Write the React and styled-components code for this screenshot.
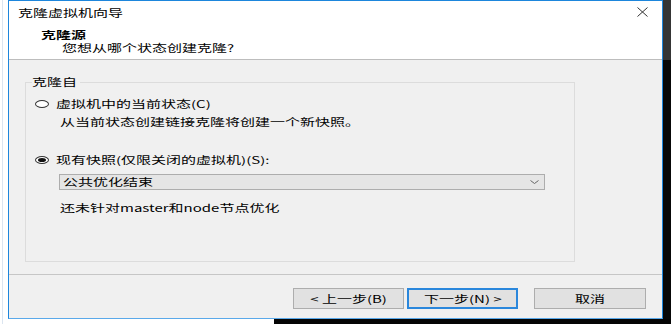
import React from "react";
import styled, { createGlobalStyle } from "styled-components";

const GlobalStyle = createGlobalStyle`
  html, body { margin: 0; padding: 0; background: #fff; }
  body {
    font-family: "Noto Sans CJK SC", "Noto Sans", sans-serif;
    color: #000;
    font-size: 10px;
    line-height: 12px;
  }
  * { box-sizing: border-box; }
`;

const Page = styled.div`
  display: flex;
  width: 671px;
  height: 324px;
  overflow: hidden;
  background: #fff;
`;

const LeftEdge = styled.div`
  margin-left: 2px;
  width: 6px;
  border-left: 1px solid #dbe5f0;
`;

const Main = styled.div`
  display: flex;
  flex-direction: column;
  width: 663px;
`;

const WindowRow = styled.div`
  display: flex;
  height: 319px;
`;

const Desk = styled.div`
  display: flex;
  flex-direction: column;
  width: 8px;
`;

const DeskPart = styled.div`
  background: ${(p) => p.$color};
  height: ${(p) => (p.$h ? `${p.$h}px` : "auto")};
  flex: ${(p) => (p.$h ? "none" : "1")};
`;

const BottomRow = styled.div`
  display: flex;
  height: 5px;
`;

const BottomPart = styled.div`
  background: ${(p) => p.$color};
  width: ${(p) => (p.$w ? `${p.$w}px` : "auto")};
  flex: ${(p) => (p.$w ? "none" : "1")};
`;

const Window = styled.div`
  width: 655px;
  height: 319px;
  border: 1px solid #1d86dc;
  border-bottom-color: #5aa9ea;
  background: #f0f0f0;
  display: flex;
  flex-direction: column;
`;

const Header = styled.div`
  height: 59px;
  background: #fff;
  border-bottom: 1px solid #bdbdbd;
  padding: 6px 14px 0 9px;
`;

const TitleRow = styled.div`
  display: flex;
  justify-content: space-between;
  align-items: flex-start;
  height: 12px;
`;

const Txt = styled.span`
  display: inline-block;
  font-size: 10px;
  line-height: 12px;
  vertical-align: top;
  white-space: nowrap;
  font-weight: ${(p) => (p.$bold ? 700 : 400)};
  transform: scaleX(1.5);
  transform-origin: ${(p) => (p.$center ? "center" : "left")} center;
`;

const Heading = styled.div`
  margin: 10px 0 0 23px;
  display: flex;
  flex-direction: column;
  gap: 1px;
`;

const SubLine = styled.div`
  height: 12px;
  margin-left: ${(p) => p.$indent || 0}px;
`;

const Body = styled.div`
  height: 214px;
  padding: 16px 0 0 16px;
`;

const Group = styled.fieldset`
  margin: 0;
  padding: 0 0 0 9px;
  width: 550px;
  height: 186px;
  border: 1px solid #dcdcdc;
  min-inline-size: 0;
`;

const Legend = styled.legend`
  margin-left: -3px;
  padding: 0;
  width: 48px;
  height: 12px;
  line-height: 12px;
`;

const Content = styled.div`
  display: flex;
  flex-direction: column;
  align-items: flex-start;
`;

const RadioRow = styled.div`
  display: flex;
  align-items: center;
  gap: 7px;
  height: 12px;
  margin-top: ${(p) => p.$mt}px;
`;

const Radio = styled.span`
  flex: none;
  width: 14px;
  height: 8px;
  border: 1px solid #333;
  border-radius: 50%;
  background: #fff;
  display: flex;
  align-items: center;
  justify-content: center;
  &::after {
    content: "";
    display: ${(p) => (p.$checked ? "block" : "none")};
    width: 8px;
    height: 4px;
    border-radius: 50%;
    background: #111;
  }
`;

const Note = styled.div`
  height: 12px;
  margin: ${(p) => p.$mt}px 0 0 25px;
`;

const Select = styled.div`
  margin: 8px 0 0 24px;
  width: 486px;
  height: 16px;
  border: 1px solid #adadad;
  background: #e5e5e5;
  display: flex;
  align-items: center;
  justify-content: space-between;
  padding: 0 5px 0 3px;
`;

const Footer = styled.div`
  height: 44px;
  border-top: 1px solid #c6c6c6;
  display: flex;
  justify-content: flex-end;
  align-items: flex-start;
  padding: 13px 16px 0 0;
`;

const Button = styled.div`
  width: ${(p) => p.$w || 111}px;
  height: 21px;
  margin-left: ${(p) => p.$ml || 0}px;
  border: ${(p) => (p.$primary ? "2px solid #2a87dc" : "1px solid #adadad")};
  background: #e1e1e1;
  display: flex;
  align-items: center;
  justify-content: center;
`;

const CloseIcon = () => (
  <svg width="11" height="10" viewBox="0 0 11 10">
    <path d="M0.5 0.5 L10.5 9.5 M10.5 0.5 L0.5 9.5" stroke="#333" strokeWidth="1" fill="none" />
  </svg>
);

const Chevron = () => (
  <svg width="9" height="4" viewBox="0 0 9 4">
    <path d="M0.5 0.5 L4.5 3.5 L8.5 0.5" stroke="#666" strokeWidth="1" fill="none" />
  </svg>
);

export default function App() {
  return (
    <>
      <GlobalStyle />
      <Page>
        <LeftEdge />
        <Main>
          <WindowRow>
            <Window>
              <Header>
                <TitleRow>
                  <Txt>克隆虚拟机向导</Txt>
                  <CloseIcon />
                </TitleRow>
                <Heading>
                  <SubLine>
                    <Txt $bold>克隆源</Txt>
                  </SubLine>
                  <SubLine $indent={21}>
                    <Txt>您想从哪个状态创建克隆?</Txt>
                  </SubLine>
                </Heading>
              </Header>
              <Body>
                <Group>
                  <Legend>
                    <Txt>克隆自</Txt>
                  </Legend>
                  <Content>
                    <RadioRow $mt={10}>
                      <Radio />
                      <Txt>虚拟机中的当前状态(C)</Txt>
                    </RadioRow>
                    <Note $mt={6}>
                      <Txt>从当前状态创建链接克隆将创建一个新快照。</Txt>
                    </Note>
                    <RadioRow $mt={26}>
                      <Radio $checked />
                      <Txt>现有快照(仅限关闭的虚拟机)(S):</Txt>
                    </RadioRow>
                    <Select>
                      <Txt>公共优化结束</Txt>
                      <Chevron />
                    </Select>
                    <Note $mt={12}>
                      <Txt>还未针对master和node节点优化</Txt>
                    </Note>
                  </Content>
                </Group>
              </Body>
              <Footer>
                <Button>
                  <Txt $center>&lt; 上一步(B)</Txt>
                </Button>
                <Button $primary $ml={3}>
                  <Txt $center>下一步(N) &gt;</Txt>
                </Button>
                <Button $ml={16} $w={112}>
                  <Txt $center>取消</Txt>
                </Button>
              </Footer>
            </Window>
            <Desk>
              <DeskPart $color="#353535" $h={60} />
              <DeskPart $color="#080808" />
            </Desk>
          </WindowRow>
          <BottomRow>
            <BottomPart $color="#ffffff" $w={266} />
            <BottomPart $color="#050505" />
          </BottomRow>
        </Main>
      </Page>
    </>
  );
}
